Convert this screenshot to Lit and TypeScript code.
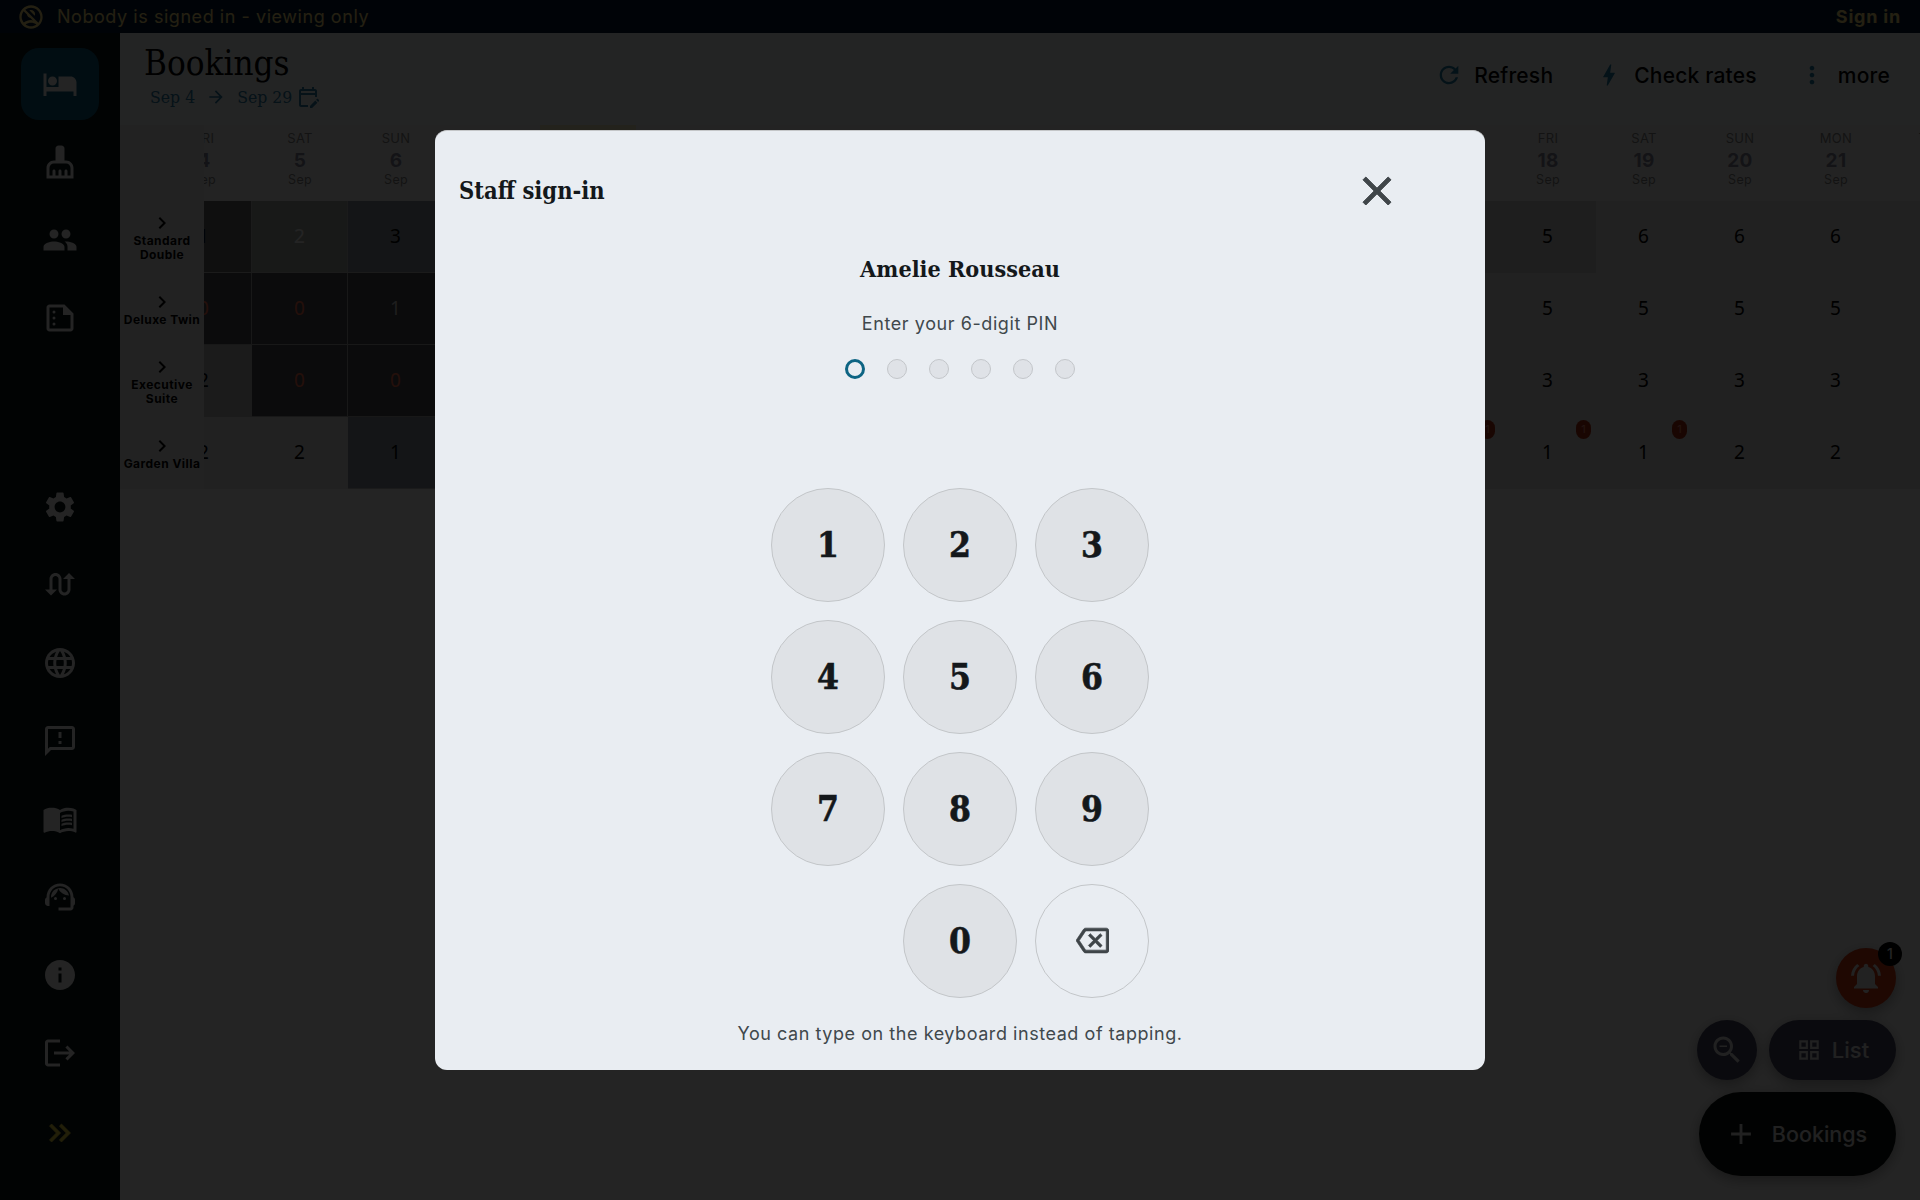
import { LitElement, html, css, svg } from "lit";
import { customElement } from "lit/decorators.js";

const I: Record<string, string> = {
  bed: "M7 13c1.66 0 3-1.34 3-3S8.66 7 7 7s-3 1.34-3 3 1.34 3 3 3zm12-6h-8v7H3V5H1v15h2v-3h18v3h2v-9c0-2.21-1.79-4-4-4z",
  brush: "M16 11h-1V3c0-1.1-.9-2-2-2h-2c-1.1 0-2 .9-2 2v8H8c-2.76 0-5 2.24-5 5v7h18v-7c0-2.76-2.24-5-5-5zm3 10h-2v-3c0-.55-.45-1-1-1s-1 .45-1 1v3h-2v-3c0-.55-.45-1-1-1s-1 .45-1 1v3H9v-3c0-.55-.45-1-1-1s-1 .45-1 1v3H5v-5c0-1.65 1.35-3 3-3h8c1.65 0 3 1.35 3 3v5z",
  people: "M16 11c1.66 0 2.99-1.34 2.99-3S17.66 5 16 5c-1.66 0-3 1.34-3 3s1.34 3 3 3zm-8 0c1.66 0 2.99-1.34 2.99-3S9.66 5 8 5C6.34 5 5 6.34 5 8s1.34 3 3 3zm0 2c-2.33 0-7 1.17-7 3.5V19h14v-2.5c0-2.33-4.67-3.5-7-3.5zm8 0c-.29 0-.62.02-.97.05 1.16.84 1.97 1.97 1.97 3.45V19h6v-2.5c0-2.33-4.67-3.5-7-3.5z",
  summarize: "M15 3H5c-1.1 0-2 .9-2 2v14c0 1.1.9 2 2 2h14c1.1 0 2-.9 2-2V9l-6-6zM19 19H5V5h9v5h5v9z M8 7a1 1 0 1 0 0 2 1 1 0 0 0 0-2z M8 11a1 1 0 1 0 0 2 1 1 0 0 0 0-2z M8 15a1 1 0 1 0 0 2 1 1 0 0 0 0-2z",
  settings: "M19.14 12.94c.04-.3.06-.61.06-.94 0-.32-.02-.64-.07-.94l2.03-1.58c.18-.14.23-.41.12-.61l-1.92-3.32c-.12-.22-.37-.29-.59-.22l-2.39.96c-.5-.38-1.03-.7-1.62-.94l-.36-2.54c-.04-.24-.24-.41-.48-.41h-3.84c-.24 0-.43.17-.47.41l-.36 2.54c-.59.24-1.13.57-1.62.94l-2.39-.96c-.22-.08-.47 0-.59.22L2.74 8.87c-.12.21-.08.47.12.61l2.03 1.58c-.05.3-.09.63-.09.94s.02.64.07.94l-2.03 1.58c-.18.14-.23.41-.12.61l1.92 3.32c.12.22.37.29.59.22l2.39-.96c.5.38 1.03.7 1.62.94l.36 2.54c.05.24.24.41.48.41h3.84c.24 0 .44-.17.47-.41l.36-2.54c.59-.24 1.13-.56 1.62-.94l2.39.96c.22.08.47 0 .59-.22l1.92-3.32c.12-.22.07-.47-.12-.61l-2.01-1.58zM12 15.6c-1.98 0-3.6-1.62-3.6-3.6s1.62-3.6 3.6-3.6 3.6 1.62 3.6 3.6-1.62 3.6-3.6 3.6z",
  swap: "M18 4l-4 4h3v7c0 1.1-.9 2-2 2s-2-.9-2-2V8c0-2.21-1.79-4-4-4S5 5.79 5 8v7H2l4 4 4-4H7V8c0-1.1.9-2 2-2s2 .9 2 2v7c0 2.21 1.79 4 4 4s4-1.79 4-4V8h3l-4-4z",
  globe: "M11.99 2C6.47 2 2 6.48 2 12s4.47 10 9.99 10C17.52 22 22 17.52 22 12S17.52 2 11.99 2zm6.93 6h-2.95c-.32-1.25-.78-2.45-1.38-3.56 1.84.63 3.37 1.91 4.33 3.56zM12 4.04c.83 1.2 1.48 2.53 1.91 3.96h-3.82c.43-1.43 1.08-2.76 1.91-3.96zM4.26 14C4.1 13.36 4 12.69 4 12s.1-1.36.26-2h3.38c-.08.66-.14 1.32-.14 2 0 .68.06 1.34.14 2H4.26zm.82 2h2.95c.32 1.25.78 2.45 1.38 3.56-1.84-.63-3.37-1.9-4.33-3.56zm2.95-8H5.08c.96-1.66 2.49-2.93 4.33-3.56C8.81 5.55 8.35 6.75 8.03 8zM12 19.96c-.83-1.2-1.48-2.53-1.91-3.96h3.82c-.43 1.43-1.08 2.76-1.91 3.96zM14.34 14H9.66c-.09-.66-.16-1.32-.16-2 0-.68.07-1.35.16-2h4.68c.09.65.16 1.32.16 2 0 .68-.07 1.34-.16 2zm.25 5.56c.6-1.11 1.06-2.31 1.38-3.56h2.95c-.96 1.65-2.49 2.93-4.33 3.56zM16.36 14c.08-.66.14-1.32.14-2 0-.68-.06-1.34-.14-2h3.38c.16.64.26 1.31.26 2s-.1 1.36-.26 2h-3.38z",
  feedback: "M20 2H4c-1.1 0-1.99.9-1.99 2L2 22l4-4h14c1.1 0 2-.9 2-2V4c0-1.1-.9-2-2-2zm0 14H5.17L4 17.17V4h16v12zM11 12h2v2h-2zm0-6h2v4h-2z",
  book: "M21 5c-1.11-.35-2.33-.5-3.5-.5-1.95 0-4.05.4-5.5 1.5-1.45-1.1-3.55-1.5-5.5-1.5S2.45 4.9 1 6v14.65c0 .25.25.5.5.5.1 0 .15-.05.25-.05C3.1 20.45 5.05 20 6.5 20c1.95 0 4.05.4 5.5 1.5 1.35-.85 3.8-1.5 5.5-1.5 1.65 0 3.35.3 4.75 1.05.1.05.15.05.25.05.25 0 .5-.25.5-.5V6c-.6-.45-1.25-.75-2-1zm0 13.5c-1.1-.35-2.3-.5-3.5-.5-1.7 0-4.15.65-5.5 1.5V8c1.35-.85 3.8-1.5 5.5-1.5 1.2 0 2.4.15 3.5.5v11.5z M17.5 10.5c.88 0 1.73.09 2.5.26V9.24c-.79-.15-1.64-.24-2.5-.24-1.7 0-3.24.29-4.5.83v1.66c1.13-.64 2.7-.99 4.5-.99zM13 12.49v1.66c1.13-.64 2.7-.99 4.5-.99.88 0 1.73.09 2.5.26V11.9c-.79-.15-1.64-.24-2.5-.24-1.7 0-3.24.3-4.5.83zM17.5 14.33c-1.7 0-3.24.29-4.5.83v1.66c1.13-.64 2.7-.99 4.5-.99.88 0 1.73.09 2.5.26v-1.52c-.79-.16-1.64-.24-2.5-.24z",
  agent: "M21 12.22C21 6.73 16.74 3 12 3c-4.69 0-9 3.65-9 9.28-.6.34-1 .98-1 1.72v2c0 1.1.9 2 2 2h1v-6.1c0-3.87 3.13-7 7-7s7 3.13 7 7V19h-8v2h8c1.1 0 2-.9 2-2v-1.22c.59-.31 1-.92 1-1.64v-2.3c0-.7-.41-1.31-1-1.62z M9 12a1 1 0 1 0 0 2 1 1 0 0 0 0-2z M15 12a1 1 0 1 0 0 2 1 1 0 0 0 0-2z M18 11.03C17.52 8.18 15.04 6 12.05 6c-3.03 0-6.29 2.51-6.03 6.45 2.47-1.01 4.33-3.21 4.86-5.89 1.31 2.63 4 4.44 7.12 4.47z",
  info: "M12 2C6.48 2 2 6.48 2 12s4.48 10 10 10 10-4.48 10-10S17.52 2 12 2zm1 15h-2v-6h2v6zm0-8h-2V7h2v2z",
  logout: "M17 7l-1.41 1.41L18.17 11H8v2h10.17l-2.58 2.58L17 17l5-5zM4 5h8V3H4c-1.1 0-2 .9-2 2v14c0 1.1.9 2 2 2h8v-2H4V5z",
  dbl: "M6.41 6 5 7.41 9.58 12 5 16.59 6.41 18l6-6z M13 6l-1.41 1.41L16.17 12l-4.58 4.59L13 18l6-6z",
  noacc: "M15.18 10.94c.2-.44.32-.92.32-1.44C15.5 7.57 13.93 6 12 6c-.52 0-1 .12-1.44.32l4.62 4.62z M12 2C6.48 2 2 6.48 2 12s4.48 10 10 10 10-4.48 10-10S17.52 2 12 2zM4 12c0-1.85.63-3.55 1.69-4.9l2.86 2.86c.21 1.56 1.43 2.79 3 3l2.2 2.2C13.17 14.59 12.61 14.5 12 14.5c-2.32 0-4.45.8-6.14 2.12C4.7 15.24 4 13.7 4 12zm8 8c-1.74 0-3.34-.56-4.65-1.5C8.66 17.56 10.26 17 12 17s3.34.56 4.65 1.5c-1.31.94-2.91 1.5-4.65 1.5zm6.31-3.1L7.1 5.69C8.45 4.63 10.15 4 12 4c4.42 0 8 3.58 8 8 0 1.85-.63 3.54-1.69 4.9z",
  arrow: "M12 4l-1.41 1.41L16.17 11H4v2h12.17l-5.58 5.59L12 20l8-8z",
  cal: "M5 10h14v2h2V6c0-1.1-.9-2-2-2h-1V2h-2v2H8V2H6v2H5c-1.11 0-1.99.9-1.99 2L3 20c0 1.1.89 2 2 2h7v-2H5V10zm0-4h14v2H5V6zm17.84 10.28-.71.71-2.12-2.12.71-.71c.39-.39 1.02-.39 1.41 0l.71.71c.39.39.39 1.02 0 1.41zm-3.54-.7 2.12 2.12-5.3 5.3H14v-2.12l5.3-5.3z",
  refresh: "M17.65 6.35C16.2 4.9 14.21 4 12 4c-4.42 0-7.99 3.58-7.99 8s3.57 8 7.99 8c3.73 0 6.84-2.55 7.73-6h-2.08c-.82 2.33-3.04 4-5.65 4-3.31 0-6-2.69-6-6s2.69-6 6-6c1.66 0 3.14.69 4.22 1.78L13 11h7V4l-2.35 2.35z",
  bolt: "M11 21h-1l1-7H7.5c-.58 0-.57-.32-.38-.66.19-.34.05-.08.07-.12C8.48 10.94 10.42 7.54 13 3h1l-1 7h3.5c.49 0 .56.33.47.51l-.07.15C12.96 17.55 11 21 11 21z",
  vert: "M12 8c1.1 0 2-.9 2-2s-.9-2-2-2-2 .9-2 2 .9 2 2 2zm0 2c-1.1 0-2 .9-2 2s.9 2 2 2 2-.9 2-2-.9-2-2-2zm0 6c-1.1 0-2 .9-2 2s.9 2 2 2 2-.9 2-2-.9-2-2-2z",
  chev: "M10 6L8.59 7.41 13.17 12l-4.58 4.59L10 18l6-6z",
  bell: "M7.58 4.08 6.15 2.65C3.75 4.48 2.17 7.3 2.03 10.5h2c.15-2.65 1.51-4.97 3.55-6.42zm12.39 6.42h2c-.15-3.2-1.73-6.02-4.12-7.85l-1.42 1.43c2.02 1.45 3.39 3.77 3.54 6.42zM18 11c0-3.07-1.64-5.64-4.5-6.32V4c0-.83-.67-1.5-1.5-1.5s-1.5.67-1.5 1.5v.68C7.63 5.36 6 7.92 6 11v5l-2 2v1h16v-1l-2-2v-5zm-6 11c.14 0 .27-.01.4-.04.65-.14 1.18-.58 1.44-1.18.1-.24.15-.5.15-.78h-4c.01 1.1.9 2 2.01 2z",
  zoomout: "M15.5 14h-.79l-.28-.27C15.41 12.59 16 11.11 16 9.5 16 5.91 13.09 3 9.5 3S3 5.91 3 9.5 5.91 16 9.5 16c1.61 0 3.09-.59 4.23-1.57l.27.28v.79l5 4.99L20.49 19l-4.99-5zm-6 0C7.01 14 5 11.99 5 9.5S7.01 5 9.5 5 14 7.01 14 9.5 11.99 14 9.5 14zM7 9h5v1H7z",
  grid: "M3 3v8h8V3H3zm6 6H5V5h4v4zm-6 4v8h8v-8H3zm6 6H5v-4h4v4zm4-16v8h8V3h-8zm6 6h-4V5h4v4zm-6 4v8h8v-8h-8zm6 6h-4v-4h4v4z",
  add: "M19 13h-6v6h-2v-6H5v-2h6V5h2v6h6v2z",
  back: "M22 3H7c-.69 0-1.23.35-1.59.88L0 12l5.41 8.11c.36.53.9.89 1.59.89h15c1.1 0 2-.9 2-2V5c0-1.1-.9-2-2-2zm0 16H7.07L2.4 12l4.66-7H22v14zm-11.59-2L14 13.41 17.59 17 19 15.59 15.41 12 19 8.41 17.59 7 14 10.59 10.41 7 9 8.41 12.59 12 9 15.59z",
  close: "M19 6.41 17.59 5 12 10.59 6.41 5 5 6.41 10.59 12 5 17.59 6.41 19 12 13.41 17.59 19 19 17.59 13.41 12z",
};

const icon = (name: string, size: number) => html`<svg class="ic" width=${size} height=${size} viewBox="0 0 24 24" fill="currentColor">${svg`<path d=${I[name]}></path>`}</svg>`;

const WD = ["SUN", "MON", "TUE", "WED", "THU", "FRI", "SAT"];
// Sep 4 is a Friday; the grid runs to Sep 22.
const DAYS = Array.from({ length: 19 }, (_, i) => ({ d: 4 + i, wd: WD[(5 + i) % 7] }));

const ROOMS = [
  { name: "Standard Double", vals: [1, 2, 3, 4, 4, 4, 4, 4, 4, 4, 4, 4, 4, 4, 5, 6, 6, 6, 6] },
  { name: "Deluxe Twin", vals: [0, 0, 1, 2, 3, 3, 3, 3, 3, 3, 4, 4, 4, 5, 5, 5, 5, 5, 5] },
  { name: "Executive Suite", vals: [2, 0, 0, 1, 2, 2, 2, 2, 2, 3, 3, 3, 3, 3, 3, 3, 3, 3, 3] },
  { name: "Garden Villa", vals: [2, 2, 1, 2, 2, 2, 2, 2, 2, 2, 2, 2, 2, 1, 1, 1, 2, 2, 2] },
];

// Tint of each visible cell, keyed by row and day index; everything else stays plain.
const tint = (r: number, i: number, v: number) => {
  if (v === 0) return "t0";
  if (r === 0 && i === 0) return "t1";
  if (r === 0 && i === 1) return "t2";
  if (r === 0 && i === 2) return "t3";
  if (r === 1 && i === 2) return "t0";
  if (r === 2 && i === 0) return "t4";
  if (r === 3 && i === 2) return "t3";
  if (r === 0 && i === 14) return "t5";
  if (r === 0 && i === 13) return "t5";
  return "";
};
const hasBadge = (r: number, i: number) => r === 3 && (i === 13 || i === 14 || i === 15);

@customElement("app-root")
export class AppRoot extends LitElement {
  static styles = css`
    :host { display: block; width: 1920px; height: 1200px; position: relative; overflow: hidden; font-family: Inter, "Liberation Sans", sans-serif; background: #fff; }
    * { box-sizing: border-box; }
    .ic { display: block; flex: none; }
    .app { width: 100%; height: 100%; display: flex; flex-direction: column; }
    .top { height: 33px; flex: none; background: #001b33; display: flex; align-items: center; justify-content: space-between; padding: 0 19px 0 17px; color: #ffe080; font-size: 18px; letter-spacing: .55px; }
    .top .l { display: flex; align-items: center; gap: 12px; }
    .top b { font-weight: 700; letter-spacing: .8px; }
    .body { flex: 1; display: flex; min-height: 0; }
    .side { width: 120px; flex: none; background: #071515; color: #fafafa; display: flex; flex-direction: column; padding: 12px 0 30px; }
    .nav { height: 78px; display: flex; align-items: center; justify-content: center; position: relative; }
    .nav.on::before { content: ""; position: absolute; left: 21px; width: 78px; top: 3px; height: 72px; border-radius: 18px; background: #0c5f80; }
    .nav .ic { position: relative; }
    .nav.dbl { color: #f0d840; padding-top: 4px; }
    .nav.dbl path { stroke: currentColor; stroke-width: .5; }
    .sp { margin-top: auto; }
    .main { flex: 1; min-width: 0; display: flex; flex-direction: column; background: #fff; }
    .head { height: 92px; flex: none; background: #f8ffff; display: flex; justify-content: space-between; padding: 0 30px 0 24px; }
    h1 { margin: 10px 0 0; font: 400 34.7px/40px "DejaVu Serif Condensed", "DejaVu Serif", serif; color: #000; }
    .range { display: flex; align-items: center; gap: 11px; margin: 2px 0 0 6px; color: #2a7ea8; font: 400 17.5px/24px "DejaVu Serif Condensed", "DejaVu Serif", serif; }
    .range .g { gap: 4px; display: flex; align-items: center; }
    .acts { display: flex; align-items: flex-start; gap: 41.5px; padding-top: 27px; }
    .act { display: flex; align-items: center; gap: 11.5px; font-size: 21px; font-weight: 500; color: #000; height: 30px; letter-spacing: .2px; }
    .act .ic { color: #1f7ea8; }
    .grid { display: flex; flex: none; background: #eee; }
    .labels { width: 84px; flex: none; background: #f2f2f2; position: relative; z-index: 1; }
    .lh { height: 76px; }
    .lr { height: 72px; display: flex; flex-direction: column; align-items: center; justify-content: center; font-size: 12px; font-weight: 700; line-height: 14px; text-align: center; letter-spacing: .45px; color: #000; padding: 0 2px; }
    .lr .ic { color: #000; margin: -2px 0; }
    .lr span { margin-top: 1px; }
    .sc { flex: 1; overflow: hidden; min-width: 0; }
    .tb { margin-left: -48px; display: grid; grid-template-columns: repeat(19, 96px); width: max-content; }
    .hc { height: 76px; background: #f8f8f8; display: flex; flex-direction: column; align-items: center; padding-top: 5px; color: #888; font-size: 13px; line-height: 16px; letter-spacing: .3px; }
    .hc.today { background: #f7efc8; margin-top: -8px; height: 84px; padding-top: 13px; }
    .hc b { font-size: 19px; line-height: 24px; font-weight: 700; color: #8a8a9c; margin-top: 3px; margin-bottom: -1px; }
    .hc span { font-size: 12.5px; }
    .c { height: 72px; border-right: 1px solid transparent; border-bottom: 1px solid transparent; padding-bottom: 2px; display: flex; align-items: center; justify-content: center; font: 400 19px "Noto Sans", sans-serif; color: #000; position: relative; background: #e6e6e6; }
    .c.t0 { background: #4d4d55; border-color: #a8a8a8; color: #ff7050; }
    .c.t0.g { color: #d0d0d0; }
    .c.t1 { background: #6a6a6a; border-color: #c0c0c0; }
    .c.t2 { background: #acb2ac; border-color: #c0c0c0; color: #fff; }
    .c.t3 { background: #8c98a0; border-color: #c0c0c0; }
    .c.t4 { background: #c0c0c0; border-color: #c0c0c0; }
    .c.t5 { background: #d2d2d2; }
    .bd { position: absolute; right: 4px; top: 3px; width: 15px; height: 19px; border-radius: 8px; background: #b03010; color: #f09080; font: 400 11px/19px Inter, sans-serif; text-align: center; }
    .fabs { position: absolute; right: 24px; bottom: 24px; display: flex; flex-direction: column; align-items: flex-end; gap: 12px; }
    .fab { background: #4a4a66; color: #e8e8e8; height: 60px; border-radius: 30px; display: flex; align-items: center; justify-content: center; box-shadow: 0 4px 14px rgba(0,0,0,.35); font-size: 22px; font-weight: 500; }
    .row { display: flex; gap: 12px; }
    .round { width: 60px; }
    .list { width: 127px; gap: 10px; }
    .bell { width: 60px; background: #d83810; color: #f0f0f0; position: relative; }
    .bell i { position: absolute; right: -6px; top: -6px; width: 24px; height: 24px; border-radius: 50%; background: #000; color: #fff; font: 500 14px/24px Inter, sans-serif; text-align: center; }
    .big { width: 197px; height: 84px; border-radius: 42px; background: #0c1410; gap: 14px; font-size: 21.5px; padding-right: 4px; }
    .scrim { position: absolute; inset: 0; z-index: 10; background: rgba(0,0,0,.86); display: flex; align-items: center; justify-content: center; }
    .modal { width: 1050px; height: 940px; border-radius: 12px; background: #e9edf2; border-top: 1px solid #c4c6c8; display: flex; flex-direction: column; align-items: center; color: #14181b; }
    .mh { align-self: stretch; height: 48px; margin-top: 36px; display: flex; align-items: center; justify-content: space-between; padding: 0 84px 0 24px; }
    .mh h2 { margin: 0; font: 700 23.5px/30px "DejaVu Serif Condensed", "DejaVu Serif", serif; }
    .mh .ic { color: #3f4549; }
    .mh path, .clear path { stroke: currentColor; stroke-width: .5; }
    .name { margin: 0; margin-top: 36px; font: 700 23.2px/36px "DejaVu Serif Condensed", "DejaVu Serif", serif; }
    .pin { margin: 23px 0 0; font-size: 18px; line-height: 28px; letter-spacing: .58px; color: #40484c; }
    .dots { display: flex; gap: 22px; margin-top: 21px; }
    .dot { width: 20px; height: 20px; border-radius: 50%; background: #dfe2e7; border: 1.5px solid #c3c6ca; }
    .dot.on { background: transparent; border: 3px solid #0d6483; }
    .keys { display: grid; grid-template-columns: repeat(3, 114px); gap: 18px; margin-top: 109px; }
    .key { width: 114px; height: 114px; border-radius: 50%; background: #dfe2e6; border: 1.5px solid #c3c6c9; display: flex; align-items: center; justify-content: center; font: 700 35px "DejaVu Serif Condensed", "DejaVu Serif", serif; -webkit-text-stroke: .6px currentColor; color: #14181b; padding: 0 0 2px; }
    .key.clear { background: transparent; color: #3f4549; }
    .hint { margin: 22px 0 0; font-size: 18px; line-height: 28px; letter-spacing: .55px; color: #40484c; }
  `;

  render() {
    const top = ["bed", "brush", "people", "summarize"];
    const bottom = ["settings", "swap", "globe", "feedback", "book", "agent", "info", "logout"];
    return html`
      <div class="app">
        <div class="top">
          <div class="l">${icon("noacc", 28)}<span>Nobody is signed in - viewing only</span></div>
          <b>Sign in</b>
        </div>
        <div class="body">
          <nav class="side">
            ${top.map((n, i) => html`<div class="nav ${i === 0 ? "on" : ""}">${icon(n, 36)}</div>`)}
            <div class="sp"></div>
            ${bottom.map((n) => html`<div class="nav">${icon(n, 36)}</div>`)}
            <div class="nav dbl">${icon("dbl", 36)}</div>
          </nav>
          <main class="main">
            <div class="head">
              <div>
                <h1>Bookings</h1>
                <div class="range"><span>Sep 4</span>${icon("arrow", 20)}<span class="g">Sep 29 ${icon("cal", 24)}</span></div>
              </div>
              <div class="acts">
                <div class="act">${icon("refresh", 28)}Refresh</div>
                <div class="act">${icon("bolt", 28)}Check rates</div>
                <div class="act">${icon("vert", 28)}more</div>
              </div>
            </div>
            <div class="grid">
              <div class="labels">
                <div class="lh"></div>
                ${ROOMS.map((r) => html`<div class="lr">${icon("chev", 24)}<span>${r.name}</span></div>`)}
              </div>
              <div class="sc">
                <div class="tb">
                  ${DAYS.map((d) => html`<div class="hc ${d.d === 8 ? "today" : ""}">${d.wd}<b>${d.d}</b><span>Sep</span></div>`)}
                  ${ROOMS.map((r, ri) => r.vals.map((v, i) => html`<div class="c ${tint(ri, i, v)} ${ri === 1 && i === 2 ? "g" : ""}">${v}${hasBadge(ri, i) ? html`<span class="bd">1</span>` : ""}</div>`))}
                </div>
              </div>
            </div>
          </main>
        </div>
      </div>
      <div class="fabs">
        <div class="fab bell">${icon("bell", 36)}<i>1</i></div>
        <div class="row">
          <div class="fab round">${icon("zoomout", 36)}</div>
          <div class="fab list">${icon("grid", 26)}List</div>
        </div>
        <div class="fab big">${icon("add", 34)}Bookings</div>
      </div>
      <div class="scrim">
        <div class="modal">
          <div class="mh"><h2>Staff sign-in</h2>${icon("close", 48)}</div>
          <h3 class="name">Amelie Rousseau</h3>
          <p class="pin">Enter your 6-digit PIN</p>
          <div class="dots">${[0, 1, 2, 3, 4, 5].map((i) => html`<span class="dot ${i === 0 ? "on" : ""}"></span>`)}</div>
          <div class="keys">
            ${[1, 2, 3, 4, 5, 6, 7, 8, 9].map((k) => html`<button class="key">${k}</button>`)}
            <span></span>
            <button class="key">0</button>
            <button class="key clear">${icon("back", 33)}</button>
          </div>
          <p class="hint">You can type on the keyboard instead of tapping.</p>
        </div>
      </div>
    `;
  }
}
